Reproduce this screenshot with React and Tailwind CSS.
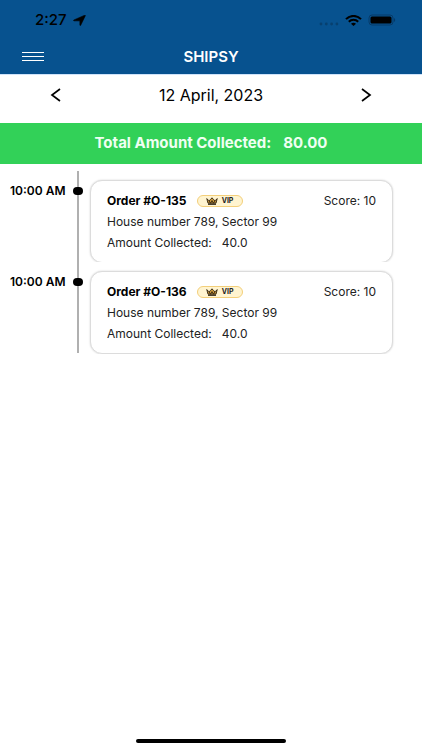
import React from "react";

const orders = [
  { id: "O-135", time: "10:00 AM", score: 10, address: "House number 789, Sector 99", amount: "40.0" },
  { id: "O-136", time: "10:00 AM", score: 10, address: "House number 789, Sector 99", amount: "40.0" },
];

function StatusBar() {
  return (
    <div className="flex h-10 items-center justify-between pr-[26px] pl-[35px] text-black">
      <div className="flex items-center gap-1.5">
        <span className="text-[15px] font-medium">2:27</span>
        <svg className="h-[11px] w-[13px]" viewBox="0 0 14 12" preserveAspectRatio="none" aria-hidden="true">
          <path d="M13.3.8 8.300 11.200c-.2.5-.9.4-.9-.2V6.400H1.200c-.7 0-.8-.8-.2-1L12.600.2c.5-.2.9.1.7.6Z" fill="currentColor" stroke="currentColor" strokeWidth=".6" />
        </svg>
      </div>
      <div className="flex items-center gap-1.5">
        <svg className="mt-2 h-1 w-5" viewBox="0 0 20 4" fill="#07406f" aria-hidden="true">
          <circle cx="2" cy="2" r="1.4" />
          <circle cx="7.3" cy="2" r="1.4" />
          <circle cx="12.6" cy="2" r="1.4" />
          <circle cx="17.9" cy="2" r="1.4" />
        </svg>
        <svg className="h-[11px] w-[17px]" viewBox="0 0 17 11" fill="none" stroke="currentColor" strokeWidth="2" aria-hidden="true">
          <path d="M1 4.2C5-.2 12-.2 16 4.2" />
          <path d="M3.8 6.8c2.6-2.7 6.8-2.7 9.4 0" />
          <path d="M6 8.8c1.4-1.4 3.6-1.4 5 0L8.500 11Z" fill="currentColor" stroke="none" />
        </svg>
        <svg className="h-3 w-7" viewBox="0 0 28 12" aria-hidden="true">
          <rect x="1" y="1" width="24" height="10" rx="3" fill="none" stroke="#063a68" />
          <rect x="2.500" y="2.500" width="21" height="7" rx="1.500" fill="currentColor" />
          <path d="M26 4v4c1.600-.6 1.600-3.400 0-4Z" fill="#063a68" />
        </svg>
      </div>
    </div>
  );
}

function Header() {
  return (
    <header className="border-b border-[#cfe3fa] bg-[#07528f]">
      <StatusBar />
      <div className="grid h-[34px] grid-cols-[1fr_auto_1fr] items-center px-[22px]">
        <button type="button" aria-label="Menu" className="w-fit">
          <svg className="block h-2.5 w-[22px]" viewBox="0 0 22 10" stroke="#ffffff" strokeWidth="1" aria-hidden="true">
            <path d="M0 .5h22M0 4.500h22M0 8.500h22" />
          </svg>
        </button>
        <h1 className="text-[15px] font-semibold text-white">SHIPSY</h1>
      </div>
    </header>
  );
}

function Chevron({ d }) {
  return (
    <svg className="block h-3.5 w-3" viewBox="0 0 12 14" fill="none" stroke="#000000" strokeWidth="1.700" aria-hidden="true">
      <path d={d} />
    </svg>
  );
}

function VipBadge() {
  return (
    <span className="flex h-3 w-[46px] items-center justify-center gap-1 rounded-full border border-[#f3cf7a] bg-[#fff4d0] text-[7px] font-bold text-[#222222]">
      <svg className="h-2 w-3" viewBox="0 0 12 8" aria-hidden="true">
        <path d="M.8 1.600 3 3.800 4.600 2.400 6 .8l1.400 1.600L9 3.800l2.200-2.200L10 6.200H2Z" fill="#c9973a" stroke="#2b1e0c" strokeWidth=".9" strokeLinejoin="round" />
        <path d="m3 3.800 1.500 2.400L6 3.600l1.500 2.600L9 3.800" fill="none" stroke="#2b1e0c" strokeWidth=".8" />
        <path d="M2 7.300h8" stroke="#2b1e0c" strokeWidth="1.100" />
      </svg>
      VIP
    </span>
  );
}

function OrderRow({ order }) {
  return (
    <li className="flex overflow-hidden pr-[29px] last:pb-px">
      <time className="w-[72px] shrink-0 pt-3 pl-2.5 text-xs leading-4 font-semibold whitespace-nowrap">{order.time}</time>
      <div className="flex w-3 shrink-0 flex-col items-center bg-linear-to-r from-[#b0b0b0] to-[#b0b0b0] bg-[length:2px_100%] bg-center bg-no-repeat pt-4">
        <span className="h-2 w-2.5 rounded-full bg-black" />
      </div>
      <article className="mt-[9px] -mb-px ml-1.5 min-w-0 flex-1 rounded-xl border border-[#dcdcdc] bg-white px-4 pt-3 pb-[11px] text-xs leading-4 text-[#222222] shadow-[0_0_2px_rgba(0,0,0,0.18)]">
        <div className="flex items-center">
          <h2 className="mr-2.5 font-bold text-black">Order #{order.id}</h2>
          <VipBadge />
          <span className="ml-auto">Score: {order.score}</span>
        </div>
        <p className="mt-[5px]">{order.address}</p>
        <p className="mt-[5px] flex gap-2.5">
          <span>Amount Collected:</span>
          <span>{order.amount}</span>
        </p>
      </article>
    </li>
  );
}

export default function App() {
  return (
    <div className="flex min-h-screen flex-col bg-white font-['Inter','Liberation_Sans',sans-serif] text-black">
      <Header />
      <main className="flex-1">
        <div className="flex h-12 items-center justify-between px-[50px] pb-2">
          <button type="button" aria-label="Previous day">
            <Chevron d="M10 1 2 7l8 6" />
          </button>
          <span className="text-base leading-5">12 April, 2023</span>
          <button type="button" aria-label="Next day">
            <Chevron d="m2 1 8 6-8 6" />
          </button>
        </div>
        <div className="flex h-[41px] items-center justify-center gap-3 bg-[#32d158] text-[15px] font-bold text-[#effff2]">
          <span>Total Amount Collected:</span>
          <span>80.00</span>
        </div>
        <ol className="mt-[7px]">
          {orders.map((order) => (
            <OrderRow key={order.id} order={order} />
          ))}
        </ol>
      </main>
      <footer className="flex justify-center pb-[7px]">
        <div className="h-1 w-[150px] rounded-full bg-black" />
      </footer>
    </div>
  );
}
